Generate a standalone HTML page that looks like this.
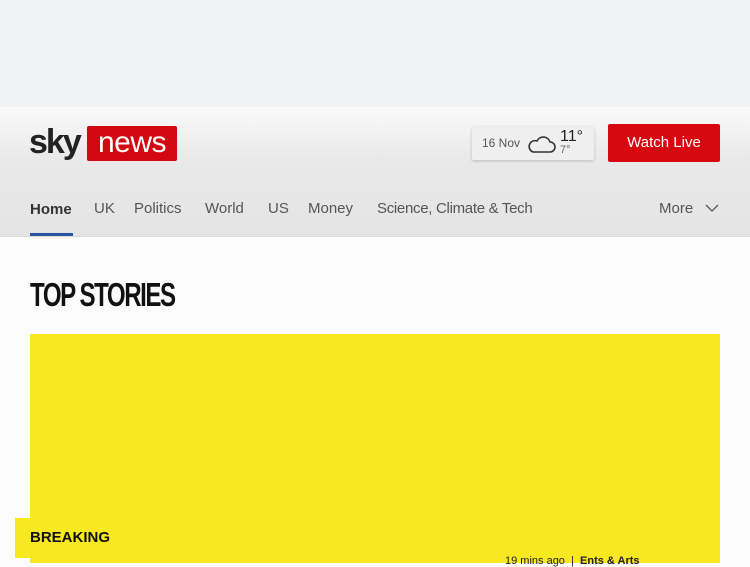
<!DOCTYPE html>
<html><head><style>
body{margin:0;width:750px;height:563px;overflow:hidden;background:#fcfcfc;font-family:"Liberation Sans",sans-serif;position:relative}
.top{position:absolute;left:0;top:0;width:750px;height:107px;background:#f1f2f4}
.hdr{position:absolute;left:0;top:107px;width:750px;height:129px;background:linear-gradient(#fafafa,#e9e9ea 40%,#e4e4e5);border-bottom:1px solid #dcdcdc}
.sky{position:absolute;left:29px;top:123px;font-size:34px;font-weight:bold;color:#222;letter-spacing:-2px}
.news{position:absolute;left:87px;top:126px;width:90px;height:35px;background:#d3070f;border-radius:2px;color:#fff;font-size:30px;line-height:33px;text-align:center;letter-spacing:-0.5px}
.wx{position:absolute;left:472px;top:127px;width:122px;height:33px;background:#efefef;box-shadow:0 1px 3px rgba(0,0,0,.2);border-radius:2px}
.btn{position:absolute;left:608px;top:124px;width:112px;height:38px;background:#d80810;border-radius:2px;color:#fff;font-size:15px;line-height:38px;text-align:center}
.nav{position:absolute;top:200px;font-size:15px;color:#555}
.ul{position:absolute;left:30px;top:233px;width:43px;height:3px;background:#2b55a6}
h1{position:absolute;left:30px;top:276px;margin:0;font-size:33px;font-weight:bold;letter-spacing:-2px;transform:scaleX(.73);transform-origin:left;color:#111}
.yel{position:absolute;left:30px;top:334px;width:690px;height:229px;background:#f8e81f}
.brk{position:absolute;left:15px;top:518px;width:90px;height:40px;background:#f8e81f;font-size:15px;font-weight:bold;line-height:40px;padding-left:15px;color:#111}
</style></head><body>
<div class="top"></div><div class="hdr"></div>
<div class="sky">sky</div><div class="news">news</div>
<div class="wx"><span style="position:absolute;left:10px;top:9px;font-size:12px;color:#555">16 Nov</span>
<svg style="position:absolute;left:54px;top:6px" width="30" height="22" viewBox="0 0 30 22"><path d="M7 19h17a5 5 0 0 0 0-10 7 7 0 0 0-13-1 5 5 0 0 0-4 11z" fill="none" stroke="#333" stroke-width="1.6"/></svg>
<span style="position:absolute;left:88px;top:1px;font-size:16px;color:#222">11°</span><span style="position:absolute;left:88px;top:17px;font-size:11px;color:#666">7°</span></div>
<div class="btn">Watch Live</div>
<span class="nav" style="left:30px;color:#333;font-weight:bold;top:201px">Home</span>
<span class="nav" style="left:94px">UK</span>
<span class="nav" style="left:134px">Politics</span>
<span class="nav" style="left:205px">World</span>
<span class="nav" style="left:268px">US</span>
<span class="nav" style="left:308px">Money</span>
<span class="nav" style="left:377px;letter-spacing:-0.3px">Science, Climate &amp; Tech</span>
<span class="nav" style="left:659px">More</span>
<svg style="position:absolute;left:705px;top:203px" width="14" height="10"><path d="M1 2l6 6 6-6" fill="none" stroke="#555" stroke-width="1.3"/></svg>
<div class="ul"></div>
<h1>TOP STORIES</h1>
<div class="yel"></div><div class="brk">BREAKING</div>
<span style="position:absolute;left:505px;top:555px;font-size:11px;color:#222">19 mins ago &nbsp;| &nbsp;<b>Ents &amp; Arts</b></span>
</body></html>
